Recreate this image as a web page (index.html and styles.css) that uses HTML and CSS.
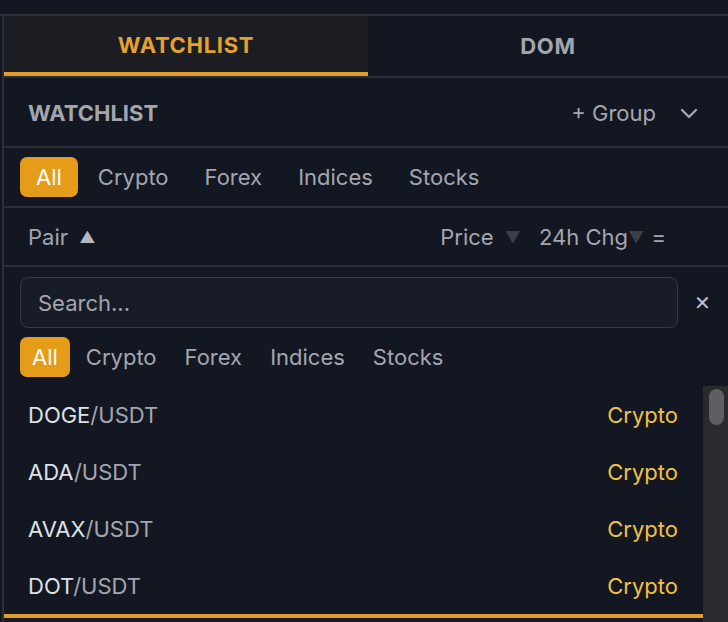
FILE: index.html
```html
<!DOCTYPE html>
<html lang="en">
<head>
    <meta charset="UTF-8">
    <meta name="viewport" content="width=device-width, initial-scale=1.0">
    <title>Watchlist</title>
    <link rel="stylesheet" href="styles.css">
</head>
<body>
    <div class="topbar"></div>
    <div class="panel">
        <div class="tabs">
            <div class="tab active">WATCHLIST</div>
            <div class="tab">DOM</div>
        </div>

        <div class="wl-header">
            <span class="wl-title">WATCHLIST</span>
            <div class="wl-actions">
                <span class="add-group">+ Group</span>
                <svg class="chevron" width="18" height="11" viewBox="0 0 18 11">
                    <path d="M2 2 L9 9 L16 2" fill="none" stroke="#a3a6af" stroke-width="2.4" stroke-linecap="round" stroke-linejoin="round"/>
                </svg>
            </div>
        </div>

        <div class="filters">
            <span class="chip active">All</span>
            <span class="chip">Crypto</span>
            <span class="chip">Forex</span>
            <span class="chip">Indices</span>
            <span class="chip">Stocks</span>
        </div>

        <div class="sort-row">
            <span class="sort-pair">Pair <span class="arrow up">&#9650;</span></span>
            <div class="sort-right">
                <span>Price <span class="arrow dim">&#9660;</span></span>
                <span class="chg">24h Chg<span class="arrow dim">&#9660;</span> =</span>
            </div>
        </div>

        <div class="picker">
            <div class="search-row">
                <div class="search">Search...</div>
                <span class="close">&#10005;</span>
            </div>
            <div class="filters small">
                <span class="chip active">All</span>
                <span class="chip">Crypto</span>
                <span class="chip">Forex</span>
                <span class="chip">Indices</span>
                <span class="chip">Stocks</span>
            </div>
            <div class="list-wrap">
                <div class="list">
                    <div class="item"><span><b>DOGE</b>/USDT</span><span class="type">Crypto</span></div>
                    <div class="item"><span><b>ADA</b>/USDT</span><span class="type">Crypto</span></div>
                    <div class="item"><span><b>AVAX</b>/USDT</span><span class="type">Crypto</span></div>
                    <div class="item"><span><b>DOT</b>/USDT</span><span class="type">Crypto</span></div>
                    <div class="item selected"></div>
                </div>
                <div class="scrollbar"><div class="thumb"></div></div>
            </div>
        </div>
    </div>
</body>
</html>
```

FILE: styles.css
```css
body {
    margin: 0;
    background: #131722;
    font-family: Inter, "Noto Sans", sans-serif;
    font-size: 22px;
    color: #a3a6af;
    height: 622px;
    overflow: hidden;
}

.topbar {
    height: 14px;
    border-bottom: 2px solid #2a2e39;
}

.panel {
    margin-left: 2px;
    border-left: 2px solid #2a2e39;
}

.tabs {
    display: flex;
    height: 60px;
    border-bottom: 2px solid #2a2e39;
}

.tab {
    flex: 1;
    display: flex;
    align-items: center;
    justify-content: center;
    font-weight: 700;
    letter-spacing: 0.7px;
    color: #a3a6af;
    box-sizing: border-box;
}

.tab.active {
    flex: 0 0 364px;
    background: #1c1d23;
    color: #e5a12e;
    border-bottom: 4px solid #e09c2d;
    padding-top: 2px;
}

.wl-header {
    height: 68px;
    display: flex;
    align-items: center;
    justify-content: space-between;
    padding: 2px 30px 0 24px;
    box-sizing: border-box;
    border-bottom: 2px solid #2a2e39;
    height: 70px;
}

.wl-title {
    font-weight: 700;
    color: #a3a6af;
}

.wl-actions {
    display: flex;
    align-items: center;
    gap: 24px;
}

.filters {
    height: 58px;
    display: flex;
    align-items: center;
    gap: 4px;
    padding: 0 16px;
    border-bottom: 2px solid #2a2e39;
}

.chip {
    color: #a3a6af;
    padding: 0 16px;
    line-height: 40px;
    border-radius: 7px;
}

.chip.active {
    background: #e59c19;
    color: #fff;
}

.sort-row {
    height: 57px;
    display: flex;
    align-items: center;
    justify-content: space-between;
    padding: 0 62px 0 24px;
    border-bottom: 2px solid #2a2e39;
}

.sort-right {
    display: flex;
    gap: 18px;
}

.arrow {
    font-size: 16px;
    vertical-align: 2px;
}

.arrow.up {
    color: #b5b8c0;
    margin-left: 5px;
}

.arrow.dim {
    color: #3b3f4a;
    margin-left: 5px;
}

.chg .arrow.dim {
    margin-left: 0;
    margin-right: 1px;
}

.picker {
    padding-top: 10px;
}

.search-row {
    display: flex;
    align-items: center;
    padding: 0 16px;
    gap: 16px;
}

.search {
    flex: 1;
    height: 51px;
    box-sizing: border-box;
    border: 1px solid #363a46;
    border-radius: 8px;
    background: #181c28;
    display: flex;
    align-items: center;
    padding-left: 17px;
    color: #a3a6af;
}

.close {
    color: #c0c3cb;
    width: 18px;
    font-size: 20px;
}

.filters.small {
    height: 58px;
    border-bottom: none;
}

.filters.small .chip {
    padding: 0 12px;
}

.list-wrap {
    display: flex;
}

.list {
    flex: 1;
}

.item {
    height: 57px;
    display: flex;
    align-items: center;
    justify-content: space-between;
    padding: 0 25px 0 24px;
    color: #a3a6af;
}

.item b {
    font-weight: 400;
    color: #dfe1e6;
}

.item .type {
    color: #f0c143;
}

.item.selected {
    border-top: 4px solid #e09c2d;
    background: #1a1a1e;
}

.scrollbar {
    width: 25px;
    background: #2a2a2e;
    padding-top: 3px;
    box-sizing: border-box;
}

.thumb {
    width: 15px;
    height: 36px;
    margin-left: 6px;
    border-radius: 8px;
    background: #5f5f63;
}
```
